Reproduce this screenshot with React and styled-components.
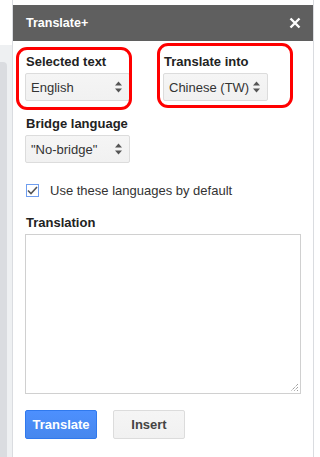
import React from 'react';
import styled, { createGlobalStyle } from 'styled-components';

const GlobalStyle = createGlobalStyle`
  html, body {
    margin: 0;
    padding: 0;
    background: #ffffff;
  }
  body {
    font-family: "Liberation Sans", Arial, sans-serif;
    color: #222;
  }
`;

const Page = styled.div`
  display: flex;
  width: 320px;
  height: 457px;
  overflow: hidden;
  background: #fff;
`;

const Gutter = styled.div`
  width: 12px;
  flex-shrink: 0;
  display: flex;
  flex-direction: column;
  border-right: 1px solid #dadce0;
`;

const GutterTop = styled.div`
  height: 45px;
  background: #fff;
`;

const GutterTrack = styled.div`
  flex: 1;
  background: #eef0f2;
  padding-top: 17px;
  padding-right: 5px;
  display: flex;
`;

const GutterThumb = styled.div`
  flex: 1;
  background: #dadce0;
  border-radius: 0 4px 0 0;
`;

const Panel = styled.div`
  width: 300px;
  flex-shrink: 0;
  padding-top: 5px;
  border-right: 1px solid #dadce0;
  display: flex;
  flex-direction: column;
`;

const TitleBar = styled.div`
  height: 36px;
  background: #5f5f5f;
  display: flex;
  align-items: center;
  justify-content: space-between;
  padding: 0 12px 0 13px;
`;

const Title = styled.span`
  color: #fff;
  font-weight: bold;
  font-size: 12.5px;
`;

const Body = styled.div`
  padding: 13px 12px 0 12px;
  display: flex;
  flex-direction: column;
`;

const Row = styled.div`
  display: flex;
  gap: 33px;
`;

const Field = styled.div`
  position: relative;
  display: flex;
  flex-direction: column;
  margin-top: ${p => p.$top || 0}px;
`;

const Label = styled.div`
  font-size: 13px;
  font-weight: bold;
  color: #222;
  line-height: 16px;
  padding-left: 1px;
  margin-bottom: 3px;
`;

const Select = styled.div`
  width: 105px;
  height: 28px;
  box-sizing: border-box;
  border: 1px solid #dcdcdc;
  border-radius: 2px;
  background: linear-gradient(#f5f5f5, #f1f1f1);
  display: flex;
  align-items: center;
  justify-content: space-between;
  padding: 0 7px 0 5px;
  font-size: 13px;
  color: #333;
`;

const Highlight = styled.div`
  position: absolute;
  top: ${p => p.$t}px;
  left: ${p => p.$l}px;
  right: ${p => p.$r}px;
  bottom: ${p => p.$b}px;
  border: 3px solid #f00;
  border-radius: 11px;
  pointer-events: none;
`;

const CheckRow = styled.div`
  display: flex;
  align-items: center;
  gap: 11px;
  margin-top: 20px;
  padding-left: 1px;
  font-size: 13px;
  color: #333;
`;

const CheckBox = styled.div`
  width: 13px;
  height: 13px;
  box-sizing: border-box;
  border: 1px solid #6f9ef0;
  background: #fff;
  display: flex;
  align-items: center;
  justify-content: center;
`;

const TextArea = styled.div`
  position: relative;
  width: 276px;
  height: 160px;
  box-sizing: border-box;
  border: 1px solid #d0d0d0;
  background: #fff;
`;

const Grip = styled.svg`
  position: absolute;
  right: 1px;
  bottom: 1px;
`;

const Buttons = styled.div`
  display: flex;
  gap: 16px;
  margin-top: 16px;
`;

const Button = styled.div`
  width: 72px;
  height: 29px;
  box-sizing: border-box;
  border-radius: 2px;
  display: flex;
  align-items: center;
  justify-content: center;
  font-size: 13px;
  font-weight: bold;
  color: ${p => (p.$primary ? '#fff' : '#444')};
  background: ${p => (p.$primary ? 'linear-gradient(#4d90fe, #4787ed)' : 'linear-gradient(#f5f5f5, #f1f1f1)')};
  border: 1px solid ${p => (p.$primary ? '#3079ed' : '#dcdcdc')};
`;

const Arrows = () => (
  <svg width="7" height="12" viewBox="0 0 7 12">
    <path d="M3.5 0.5 L7 4.5 L0 4.5 Z" fill="#555" />
    <path d="M3.5 11.5 L7 7.5 L0 7.5 Z" fill="#555" />
  </svg>
);

const Close = () => (
  <svg width="12" height="12" viewBox="0 0 12 12">
    <path d="M1.5 1.5 L10.5 10.5 M10.5 1.5 L1.5 10.5" stroke="#fff" strokeWidth="2.4" />
  </svg>
);

function Dropdown({ value }) {
  return (
    <Select>
      <span>{value}</span>
      <Arrows />
    </Select>
  );
}

export default function App() {
  return (
    <Page>
      <GlobalStyle />
      <Gutter>
        <GutterTop />
        <GutterTrack>
          <GutterThumb />
        </GutterTrack>
      </Gutter>
      <Panel>
        <TitleBar>
          <Title>Translate+</Title>
          <Close />
        </TitleBar>
        <Body>
          <Row>
            <Field>
              <Highlight $t={-7} $l={-9} $r={-2} $b={-9} />
              <Label>Selected text</Label>
              <Dropdown value="English" />
            </Field>
            <Field>
              <Highlight $t={-11} $l={-6} $r={-25} $b={-7} />
              <Label>Translate into</Label>
              <Dropdown value="Chinese (TW)" />
            </Field>
          </Row>
          <Field $top={15}>
            <Label>Bridge language</Label>
            <Dropdown value={'"No-bridge"'} />
          </Field>
          <CheckRow>
            <CheckBox>
              <svg width="11" height="9" viewBox="0 0 11 9">
                <path d="M1 4.5 L4 7.5 L10 1" fill="none" stroke="#555" strokeWidth="1.6" />
              </svg>
            </CheckBox>
            <span>Use these languages by default</span>
          </CheckRow>
          <Field $top={17}>
            <Label>Translation</Label>
            <TextArea>
              <Grip width="10" height="10" viewBox="0 0 10 10">
                <path d="M9 2 L2 9 M9 5 L5 9 M9 8 L8 9" stroke="#777" strokeWidth="1" strokeDasharray="1 1" />
              </Grip>
            </TextArea>
          </Field>
          <Buttons>
            <Button $primary>Translate</Button>
            <Button>Insert</Button>
          </Buttons>
        </Body>
      </Panel>
    </Page>
  );
}
